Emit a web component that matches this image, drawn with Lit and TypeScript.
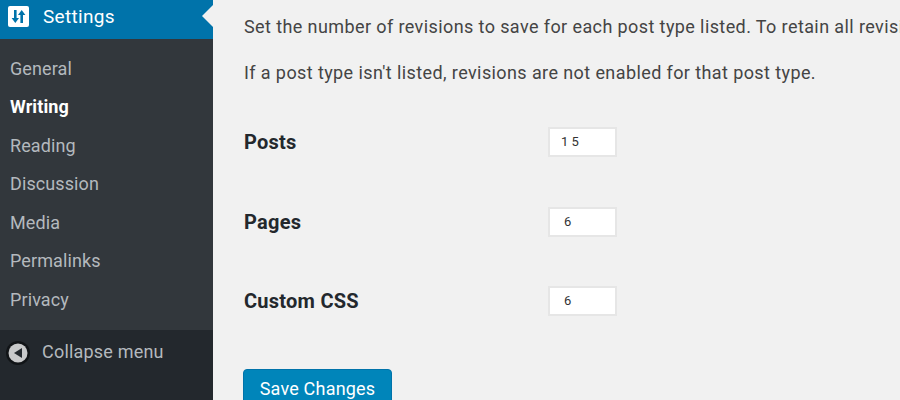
import { LitElement, html, css } from "lit";
import { customElement } from "lit/decorators.js";

const MENU = ["General", "Writing", "Reading", "Discussion", "Media", "Permalinks", "Privacy"];
const FIELDS = [
  { label: "Posts", value: "1 5", wide: true },
  { label: "Pages", value: "6", wide: false },
  { label: "Custom CSS", value: "6", wide: false },
];

@customElement("app-root")
export class AppRoot extends LitElement {
  static styles = css`
    :host {
      display: block;
      width: 900px;
      height: 400px;
      overflow: hidden;
      font-family: Roboto, "Liberation Sans", sans-serif;
    }
    .page {
      display: flex;
      height: 400px;
      background: #f1f1f1;
    }
    .sidebar {
      flex: 0 0 213px;
      display: flex;
      flex-direction: column;
      background: #32373c;
    }
    .current {
      position: relative;
      flex: 0 0 39px;
      box-sizing: border-box;
      display: flex;
      align-items: center;
      gap: 14px;
      padding: 0 0 6px 8px;
      background: #0073aa;
      color: #fff;
      font-size: 19px;
      letter-spacing: 0.3px;
    }
    .current::after {
      content: "";
      position: absolute;
      right: 0;
      top: 5px;
      border: 11px solid transparent;
      border-right-color: #f1f1f1;
      border-left-width: 0;
    }
    .menu {
      flex: 1;
      padding-top: 10.5px;
    }
    .menu div {
      height: 38.5px;
      line-height: 38.5px;
      padding-left: 10px;
      font-size: 18px;
      letter-spacing: 0.1px;
      color: #b4b9be;
    }
    .menu .active {
      color: #fff;
      font-weight: 700;
    }
    .collapse {
      flex: 0 0 70px;
      box-sizing: border-box;
      display: flex;
      align-items: flex-start;
      gap: 12px;
      padding: 11px 0 0 6px;
      background: #23282d;
      color: #b4b9be;
      font-size: 18px;
      letter-spacing: 0.2px;
      line-height: 22px;
    }
    .content {
      flex: 1;
      min-width: 0;
      padding: 16px 0 0 31px;
      color: #444;
      font-size: 18px;
      letter-spacing: 0.4px;
      white-space: nowrap;
      overflow: hidden;
    }
    p {
      margin: 0 0 24px;
      line-height: 22px;
    }
    .row {
      display: flex;
      align-items: center;
      height: 30px;
      margin-bottom: 49.5px;
    }
    .row:first-of-type {
      margin-top: 43px;
    }
    label {
      flex: 0 0 304px;
      color: #23282d;
      font-size: 20px;
      font-weight: 700;
      letter-spacing: 0.25px;
    }
    .input {
      box-sizing: border-box;
      width: 69px;
      height: 30px;
      padding: 0 0 0 14px;
      background: #fff;
      border: 2px solid #e6e6e6;
      color: #333;
      font-size: 13px;
      letter-spacing: 0;
      line-height: 26px;
    }
    .input.wide {
      padding-left: 11px;
    }
    button {
      display: block;
      width: 149px;
      height: 40px;
      /* collapses with the last row's bottom margin */
      margin: 52.5px 0 0 -1px;
      padding: 0;
      background: #0085ba;
      border: 1px solid #0073aa;
      border-radius: 4px;
      color: #fff;
      font-family: inherit;
      font-size: 18px;
      letter-spacing: 0.2px;
    }
  `;

  render() {
    return html`
      <div class="page">
        <nav class="sidebar">
          <div class="current">
            <svg width="21" height="21" viewBox="0 0 21 21">
              <rect width="21" height="21" rx="2" fill="#fff" />
              <path
                d="M6 4h2.6v8H11l-3.7 5L3.6 12H6zM12.4 17v-8H10l3.7-5 3.7 5H15v8z"
                fill="#0073aa"
              />
            </svg>
            <span>Settings</span>
          </div>
          <div class="menu">
            ${MENU.map(
              (m) => html`<div class=${m === "Writing" ? "active" : ""}>${m}</div>`,
            )}
          </div>
          <div class="collapse">
            <svg width="24" height="24" viewBox="0 0 24 24">
              <circle cx="12" cy="12" r="12" fill="#111417" />
              <circle cx="12" cy="12" r="9.5" fill="#c8c9ca" />
              <path d="M16 7v10l-8-5z" fill="#23282d" />
            </svg>
            <span>Collapse menu</span>
          </div>
        </nav>
        <main class="content">
          <p>
            Set the number of revisions to save for each post type listed. To
            retain all revisions for a post type, leave the field empty.
          </p>
          <p>If a post type isn't listed, revisions are not enabled for that post type.</p>
          ${FIELDS.map(
            (f) => html`
              <div class="row">
                <label>${f.label}</label>
                <div class="input ${f.wide ? "wide" : ""}">${f.value}</div>
              </div>
            `,
          )}
          <button>Save Changes</button>
        </main>
      </div>
    `;
  }
}
